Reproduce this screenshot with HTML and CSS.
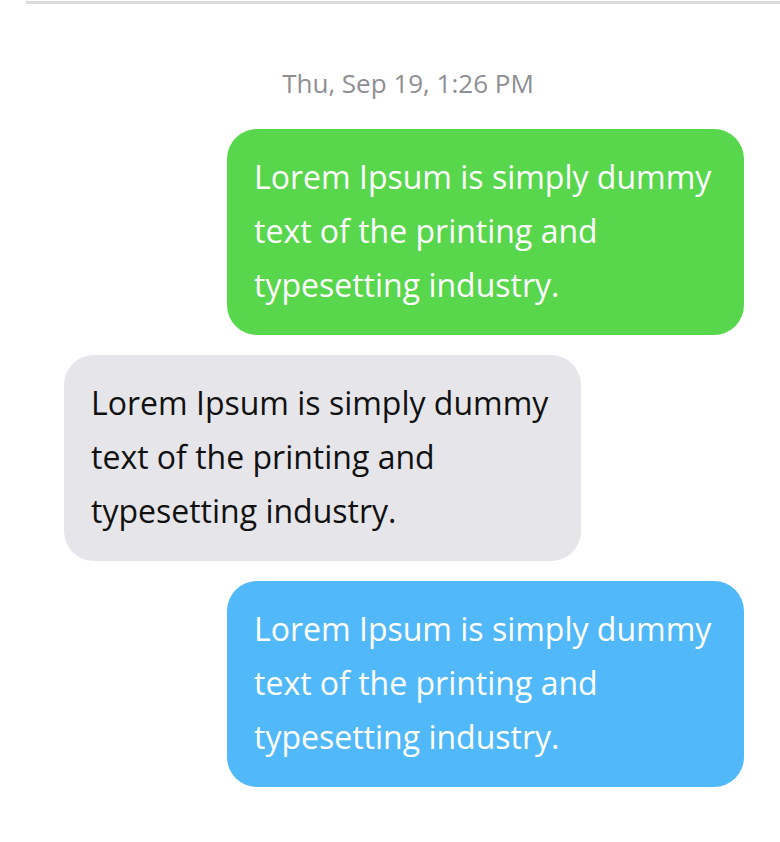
FILE: index.html
```html
<!DOCTYPE html>
<html>
<head>
<meta charset="utf-8">
<link rel="stylesheet" href="styles.css">
</head>
<body>
<div class="thread">
  <div class="stamp">Thu, Sep 19, 1:26 PM</div>
  <div class="row out"><div class="bubble green">Lorem Ipsum is simply dummy text of the printing and typesetting industry.</div></div>
  <div class="row in"><div class="bubble gray">Lorem Ipsum is simply dummy text of the printing and typesetting industry.</div></div>
  <div class="row out"><div class="bubble blue">Lorem Ipsum is simply dummy text of the printing and typesetting industry.</div></div>
</div>
</body>
</html>
```
FILE: styles.css
```css
html, body { margin: 0; padding: 0; background: #fff; }
body { font-family: "Open Sans", sans-serif; overflow: hidden; }
.thread {
  margin-top: 1px;
  margin-left: 26px;
  width: 764px;
  border-top: 3px solid #dcdcdc;
  display: flex;
  flex-direction: column;
  gap: 20px;
}
.stamp {
  text-align: center;
  color: #8e8e93;
  font-size: 26px;
  line-height: 32px;
  margin-top: 63px;
  margin-bottom: 10px;
}
.row { display: flex; }
.row.out { justify-content: flex-end; padding-right: 46px; }
.row.in { justify-content: flex-start; padding-left: 38px; }
.bubble {
  box-sizing: border-box;
  width: 517px;
  padding: 21px 27px 23px;
  border-radius: 30px;
  font-size: 32px;
  line-height: 54px;
}
.green { background: #58d64c; color: #fff; }
.gray { background: #e5e5ea; color: #111; }
.blue { background: #51b9f9; color: #fff; }
```
